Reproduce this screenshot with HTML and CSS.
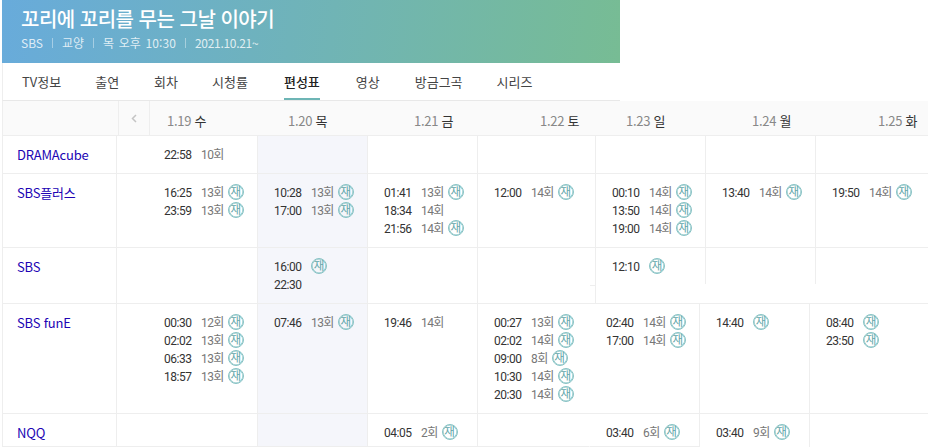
FILE: index.html
```html
<!DOCTYPE html>
<html lang="ko">
<head>
    <meta charset="UTF-8">
    <meta name="viewport" content="width=device-width, initial-scale=1.0">
    <title>꼬리에 꼬리를 무는 그날 이야기 - 편성표</title>
    <link rel="stylesheet" href="styles.css">
</head>
<body>
    <div class="page">
        <div class="banner">
            <h1>꼬리에 꼬리를 무는 그날 이야기</h1>
            <div class="info">
                <span>SBS</span><i></i><span>교양</span><i></i><span class="when">목 오후 10:30</span><i></i><span class="since">2021.10.21~</span>
            </div>
        </div>
        <div class="tabs">
            <a class="tab-1">TV정보</a>
            <a class="tab-2">출연</a>
            <a class="tab-3">회차</a>
            <a class="tab-4">시청률</a>
            <a class="tab-5 active">편성표</a>
            <a class="tab-6">영상</a>
            <a class="tab-7">방금그곡</a>
            <a class="tab-8">시리즈</a>
        </div>
        <div class="days">
            <div class="days-blank"></div>
            <div class="days-prev">
                <svg width="6" height="9" viewBox="0 0 6 9"><path d="M5 1 1.5 4.5 5 8" fill="none" stroke="#c4c4c4" stroke-width="1.5"/></svg>
            </div>
            <div class="day">1.19 <b>수</b></div>
            <div class="day">1.20 <b>목</b></div>
            <div class="day">1.21 <b>금</b></div>
            <div class="day">1.22 <b>토</b></div>
            <div class="day">1.23 <b>일</b></div>
            <div class="day">1.24 <b>월</b></div>
            <div class="day">1.25 <b>화</b></div>
        </div>

        <div class="row">
            <div class="cell channel"><a>DRAMAcube</a></div>
            <div class="cell first">
                <p><span class="time">22:58</span><span class="ep">10회</span></p>
            </div>
            <div class="cell today"></div>
            <div class="cell"></div>
            <div class="cell"></div>
            <div class="cell"></div>
            <div class="cell"></div>
            <div class="cell"></div>
        </div>

        <div class="row">
            <div class="cell channel"><a>SBS플러스</a></div>
            <div class="cell first">
                <p><span class="time">16:25</span><span class="ep">13회</span><em>재</em></p>
                <p><span class="time">23:59</span><span class="ep">13회</span><em>재</em></p>
            </div>
            <div class="cell today">
                <p><span class="time">10:28</span><span class="ep">13회</span><em>재</em></p>
                <p><span class="time">17:00</span><span class="ep">13회</span><em>재</em></p>
            </div>
            <div class="cell">
                <p><span class="time">01:41</span><span class="ep">13회</span><em>재</em></p>
                <p><span class="time">18:34</span><span class="ep">14회</span></p>
                <p><span class="time">21:56</span><span class="ep">14회</span><em>재</em></p>
            </div>
            <div class="cell">
                <p><span class="time">12:00</span><span class="ep">14회</span><em>재</em></p>
            </div>
            <div class="cell">
                <p><span class="time">00:10</span><span class="ep">14회</span><em>재</em></p>
                <p><span class="time">13:50</span><span class="ep">14회</span><em>재</em></p>
                <p><span class="time">19:00</span><span class="ep">14회</span><em>재</em></p>
            </div>
            <div class="cell">
                <p><span class="time">13:40</span><span class="ep">14회</span><em>재</em></p>
            </div>
            <div class="cell">
                <p><span class="time">19:50</span><span class="ep">14회</span><em>재</em></p>
            </div>
        </div>

        <div class="row">
            <div class="cell channel"><a>SBS</a></div>
            <div class="cell first"></div>
            <div class="cell today">
                <p><span class="time">16:00</span><em>재</em></p>
                <p><span class="time">22:30</span></p>
            </div>
            <div class="cell"></div>
            <div class="cell"></div>
            <div class="cell ticked">
                <p><span class="time">12:10</span><em>재</em></p>
            </div>
            <div class="cell short"></div>
            <div class="cell short"></div>
        </div>

        <div class="row shifted">
            <div class="cell channel"><a>SBS funE</a></div>
            <div class="cell first">
                <p><span class="time">00:30</span><span class="ep">12회</span><em>재</em></p>
                <p><span class="time">02:02</span><span class="ep">13회</span><em>재</em></p>
                <p><span class="time">06:33</span><span class="ep">13회</span><em>재</em></p>
                <p><span class="time">18:57</span><span class="ep">13회</span><em>재</em></p>
            </div>
            <div class="cell today">
                <p><span class="time">07:46</span><span class="ep">13회</span><em>재</em></p>
            </div>
            <div class="cell">
                <p><span class="time">19:46</span><span class="ep">14회</span></p>
            </div>
            <div class="cell">
                <p><span class="time">00:27</span><span class="ep">13회</span><em>재</em></p>
                <p><span class="time">02:02</span><span class="ep">14회</span><em>재</em></p>
                <p><span class="time">09:00</span><span class="ep">8회</span><em>재</em></p>
                <p><span class="time">10:30</span><span class="ep">14회</span><em>재</em></p>
                <p><span class="time">20:30</span><span class="ep">14회</span><em>재</em></p>
            </div>
            <div class="cell no-line">
                <p><span class="time">02:40</span><span class="ep">14회</span><em>재</em></p>
                <p><span class="time">17:00</span><span class="ep">14회</span><em>재</em></p>
            </div>
            <div class="cell">
                <p><span class="time">14:40</span><em>재</em></p>
            </div>
            <div class="cell">
                <p><span class="time">08:40</span><em>재</em></p>
                <p><span class="time">23:50</span><em>재</em></p>
            </div>
        </div>

        <div class="row shifted last">
            <div class="cell channel"><a>NQQ</a></div>
            <div class="cell first"></div>
            <div class="cell today"></div>
            <div class="cell">
                <p><span class="time">04:05</span><span class="ep">2회</span><em>재</em></p>
            </div>
            <div class="cell"></div>
            <div class="cell no-line">
                <p><span class="time">03:40</span><span class="ep">6회</span><em>재</em></p>
            </div>
            <div class="cell open">
                <p><span class="time">03:40</span><span class="ep">9회</span><em>재</em></p>
            </div>
            <div class="cell open"></div>
        </div>
    </div>
</body>
</html>
```

FILE: styles.css
```css
* {
    box-sizing: border-box;
}
html, body {
    margin: 0;
    height: 447px;
    overflow: hidden;
    background: white;
}
body {
    font-family: 'Noto Sans CJK KR', 'Noto Sans', sans-serif;
    font-size: 12px;
    color: #333;
}
.page {
    padding-left: 2px;
}
.banner {
    width: 618px;
    height: 63px;
    padding: 7px 19px 0;
    background: linear-gradient(97deg, #68abdb, #77bc94);
    color: white;
}
.banner h1 {
    margin: 0;
    font-size: 20px;
    font-weight: 500;
    line-height: 24px;
    letter-spacing: -0.5px;
}
.info {
    display: flex;
    align-items: center;
    gap: 9px;
    margin-top: 3px;
    line-height: 18px;
    color: rgba(255, 255, 255, 0.8);
}
.info i {
    width: 1px;
    height: 10px;
    background: rgba(255, 255, 255, 0.4);
}
.info .when {
    word-spacing: 1px;
    letter-spacing: 0.1px;
}
.info .since {
    letter-spacing: -0.3px;
}
.tabs {
    display: flex;
    width: 618px;
    height: 38px;
    border-left: 1px solid #eee;
    border-bottom: 1px solid #e8e8e8;
    font-size: 13px;
}
.tabs a {
    height: 37px;
    line-height: 37px;
    color: #444;
}
.tabs .active {
    color: #222;
    font-weight: 500;
    border-bottom: 2px solid #6db5b5;
}
.tab-1 { margin-left: 19px; }
.tab-2 { margin-left: 34px; }
.tab-3 { margin-left: 35px; }
.tab-4 { margin-left: 34px; }
.tab-5 { margin-left: 36px; }
.tab-6 { margin-left: 36px; }
.tab-7 { margin-left: 35px; }
.tab-8 { margin-left: 34px; }

.days {
    display: grid;
    grid-template-columns: 116px 32px 121px 126px 126px 86px 126px 126px 1fr;
    height: 35px;
    background: #fafafa;
    border-bottom: 1px solid #eee;
}
.days-blank {
    border-left: 1px solid #eee;
}
.days-prev {
    display: flex;
    align-items: center;
    justify-content: center;
    border-left: 1px solid #eee;
    border-right: 1px solid #eee;
}
.day {
    padding: 10px 0 0 17px;
    font-size: 13px;
    line-height: 20px;
    letter-spacing: -0.3px;
    color: #888;
}
.day b {
    font-weight: 400;
    color: #333;
}

.row {
    display: grid;
    grid-template-columns: 114px 141px 110px 110px 118px 110px 110px 1fr;
    border-bottom: 1px solid #eee;
}
.row.shifted {
    grid-template-columns: 114px 141px 110px 110px 112px 110px 110px 1fr;
}
.row.last {
    border-bottom: 0;
}
.cell {
    padding: 10px 0 9px 16px;
    border-left: 1px solid #eee;
}
.channel {
    padding-left: 14px;
    font-size: 13px;
    line-height: 18px;
    letter-spacing: -0.2px;
}
.channel a {
    color: #2004b4;
}
.first {
    padding-left: 47px;
}
.today {
    background: #f5f6fb;
}
.short {
    align-self: start;
    height: 36px;
}
.ticked {
    position: relative;
}
.ticked::before {
    content: '';
    position: absolute;
    left: -6px;
    top: 37px;
    width: 5px;
    height: 1px;
    background: #eee;
}
.no-line {
    border-left-color: transparent;
}
.last .cell {
    height: 33px;
    padding-bottom: 0;
    border-bottom: 1px solid #eee;
}
.last .cell.open {
    border-bottom: 0;
}
.cell p {
    display: flex;
    align-items: baseline;
    height: 18px;
    margin: 0;
    padding-top: 1px;
    font-family: Roboto, 'Noto Sans CJK KR', sans-serif;
    line-height: 17px;
    white-space: nowrap;
}
.time {
    width: 28px;
    margin-right: 9px;
    letter-spacing: -0.45px;
    color: #333;
}
.ep {
    margin-right: 4px;
    letter-spacing: -0.6px;
    color: #777;
}
.cell em {
    flex: none;
    align-self: flex-start;
    width: 16px;
    height: 16px;
    margin-top: -1px;
    border: 1px solid #86c2c4;
    border-radius: 50%;
    box-shadow: inset 0 0 0 0.6px #86c2c4;
    font-family: 'Noto Sans CJK KR', sans-serif;
    font-size: 11.5px;
    font-style: normal;
    line-height: 13px;
    text-align: center;
    color: #5fa6aa;
}
```
